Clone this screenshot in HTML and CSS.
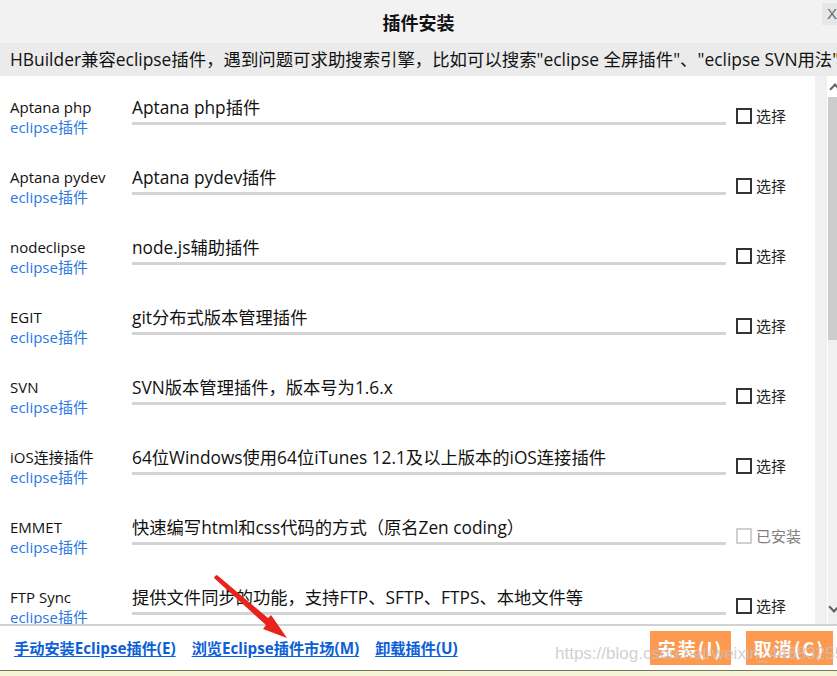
FILE: index.html
```html
<!DOCTYPE html>
<html lang="zh-CN">
<head>
<meta charset="utf-8">
<title>插件安装</title>
<link rel="stylesheet" href="styles.css">
</head>
<body>
<div class="dialog">
  <header class="titlebar">
    <h1 class="title">插件安装</h1>
    <span class="close">X</span>
  </header>
  <div class="info">HBuilder兼容eclipse插件，遇到问题可求助搜索引擎，比如可以搜索"eclipse 全屏插件"、"eclipse SVN用法"</div>
  <div class="content">
    <div class="list">
      <div class="row">
        <div class="name"><div class="pname">Aptana php</div><div class="ptype">eclipse插件</div></div>
        <div class="desc"><div class="dtext">Aptana php插件</div><div class="bar"></div></div>
        <label class="pick"><input type="checkbox" class="box"><span>选择</span></label>
      </div>
      <div class="row">
        <div class="name"><div class="pname">Aptana pydev</div><div class="ptype">eclipse插件</div></div>
        <div class="desc"><div class="dtext">Aptana pydev插件</div><div class="bar"></div></div>
        <label class="pick"><input type="checkbox" class="box"><span>选择</span></label>
      </div>
      <div class="row">
        <div class="name"><div class="pname">nodeclipse</div><div class="ptype">eclipse插件</div></div>
        <div class="desc"><div class="dtext">node.js辅助插件</div><div class="bar"></div></div>
        <label class="pick"><input type="checkbox" class="box"><span>选择</span></label>
      </div>
      <div class="row">
        <div class="name"><div class="pname">EGIT</div><div class="ptype">eclipse插件</div></div>
        <div class="desc"><div class="dtext">git分布式版本管理插件</div><div class="bar"></div></div>
        <label class="pick"><input type="checkbox" class="box"><span>选择</span></label>
      </div>
      <div class="row">
        <div class="name"><div class="pname">SVN</div><div class="ptype">eclipse插件</div></div>
        <div class="desc"><div class="dtext">SVN版本管理插件，版本号为1.6.x</div><div class="bar"></div></div>
        <label class="pick"><input type="checkbox" class="box"><span>选择</span></label>
      </div>
      <div class="row">
        <div class="name"><div class="pname">iOS连接插件</div><div class="ptype">eclipse插件</div></div>
        <div class="desc"><div class="dtext">64位Windows使用64位iTunes 12.1及以上版本的iOS连接插件</div><div class="bar"></div></div>
        <label class="pick"><input type="checkbox" class="box"><span>选择</span></label>
      </div>
      <div class="row">
        <div class="name"><div class="pname">EMMET</div><div class="ptype">eclipse插件</div></div>
        <div class="desc"><div class="dtext">快速编写html和css代码的方式（原名Zen coding）</div><div class="bar"></div></div>
        <label class="pick disabled"><input type="checkbox" class="box" disabled><span>已安装</span></label>
      </div>
      <div class="row">
        <div class="name"><div class="pname">FTP Sync</div><div class="ptype">eclipse插件</div></div>
        <div class="desc"><div class="dtext">提供文件同步的功能，支持FTP、SFTP、FTPS、本地文件等</div><div class="bar"></div></div>
        <label class="pick"><input type="checkbox" class="box"><span>选择</span></label>
      </div>
    </div>
    <div class="gutter"></div>
    <div class="scrollbar">
      <div class="sb-arrow sb-up"></div>
      <div class="sb-thumb"></div>
      <div class="sb-track"></div>
      <div class="sb-arrow sb-down"></div>
    </div>
  </div>
  <footer class="footer">
    <a class="link" href="#">手动安装Eclipse插件(E)</a>
    <a class="link" href="#">浏览Eclipse插件市场(M)</a>
    <a class="link" href="#">卸载插件(U)</a>
    <div class="buttons">
      <button class="btn btn-install">安装(I)</button>
      <button class="btn btn-cancel">取消(C)</button>
    </div>
  </footer>
  <div class="bottom-strip"></div>

  <svg class="red-arrow" width="90" height="70" viewBox="0 0 90 70">
    <polygon fill="#e8231c" points="1,1 3,0 54,43 57,40 73,63 49,54 52,50 0,3"/>
  </svg>
  <div class="watermark">https://blog.csdn.net/weixin_44683255</div>
</div>
</body>
</html>
```

FILE: styles.css
```css
* { box-sizing: border-box; }

html, body {
  margin: 0;
  padding: 0;
  background: #ffffff;
}

body {
  width: 837px;
  height: 676px;
  overflow: hidden;
  font-family: "Open Sans", "Noto Sans CJK SC", sans-serif;
  color: #1a1a1a;
}

.dialog {
  position: relative;
  width: 837px;
  height: 676px;
  display: flex;
  flex-direction: column;
  overflow: hidden;
}

.titlebar {
  height: 43px;
  flex: none;
  background: #f2f2f2;
  display: flex;
  align-items: center;
  justify-content: center;
  position: relative;
}

.title {
  margin: 0;
  font-size: 18px;
  font-weight: 700;
  color: #111;
  font-family: "Noto Sans CJK SC", sans-serif;
  line-height: 20px;
}

.close {
  position: absolute;
  top: 3px;
  right: 0;
  width: 15px;
  height: 22px;
  background: #e6e6e6;
  color: #6a6a6a;
  font-size: 15px;
  line-height: 22px;
  padding-left: 5px;
  font-family: "Liberation Sans", sans-serif;
  overflow: hidden;
}

.info {
  height: 33px;
  flex: none;
  background: #ebebeb;
  padding-left: 10px;
  font-size: 17.4px;
  line-height: 33px;
  white-space: nowrap;
  overflow: hidden;
  color: #111;
}

.content {
  height: 550px;
  flex: none;
  display: flex;
  overflow: hidden;
  border-bottom: 2px solid #d2d2d2;
}

.list {
  width: 815px;
  flex: none;
  overflow: hidden;
}

.row {
  height: 70px;
  display: flex;
}

.name {
  width: 132px;
  flex: none;
  padding-left: 10px;
  padding-top: 21px;
}

.pname {
  font-size: 15px;
  line-height: 20px;
  color: #111;
  white-space: nowrap;
}

.ptype {
  font-size: 15px;
  line-height: 20px;
  color: #2a78e4;
  white-space: nowrap;
}

.desc {
  width: 594px;
  flex: none;
  padding-top: 20px;
}

.dtext {
  font-size: 17.3px;
  line-height: 24px;
  color: #111;
  white-space: nowrap;
  overflow: hidden;
}

.bar {
  margin-top: 2px;
  height: 3px;
  background: #d4d4d4;
}

.pick {
  margin-left: 10px;
  padding-top: 31px;
  display: flex;
  align-items: flex-start;
  gap: 4px;
  font-size: 15px;
  line-height: 18px;
  color: #222;
}

.box {
  appearance: none;
  -webkit-appearance: none;
  margin: 1px 0 0 0;
  width: 16px;
  height: 16px;
  border: 2px solid #333;
  background: #fff;
  flex: none;
}

.pick.disabled {
  color: #808080;
}

.pick.disabled .box {
  border-color: #cfcfcf;
}

.gutter {
  width: 12px;
  flex: none;
  background: #f0f0f0;
}

.scrollbar {
  width: 10px;
  flex: none;
  margin-left: 1px;
  display: flex;
  flex-direction: column;
  background: #f0f0f0;
}

.sb-arrow {
  height: 21px;
  flex: none;
  position: relative;
  background: #ffffff;
}

.sb-up::before {
  content: "";
  position: absolute;
  left: 3px;
  top: 9px;
  width: 6px;
  height: 6px;
  border-left: 2px solid #606060;
  border-top: 2px solid #606060;
  transform: rotate(45deg);
}

.sb-down {
  background: #f0f0f0;
  height: 27px;
}

.sb-down::before {
  content: "";
  position: absolute;
  left: 2px;
  top: 6px;
  width: 6px;
  height: 6px;
  border-right: 2px solid #606060;
  border-bottom: 2px solid #606060;
  transform: rotate(45deg);
}

.sb-thumb {
  height: 243px;
  flex: none;
  background: #cdcdcd;
}

.sb-track {
  flex: 1;
}

.footer {
  height: 44px;
  flex: none;
  display: flex;
  align-items: center;
  padding-left: 14px;
  gap: 16px;
  background: #ffffff;
}

.link {
  font-size: 15.2px;
  font-weight: 700;
  color: #0b60d6;
  text-decoration: underline;
  text-underline-offset: 2px;
  white-space: nowrap;
  line-height: 20px;
}

.buttons {
  margin-left: auto;
  display: flex;
  gap: 15px;
  padding-right: 4px;
}

.btn {
  height: 34px;
  border: none;
  background: #fe9a50;
  color: #ffffff;
  font-family: "Noto Sans CJK SC", sans-serif;
  font-weight: 700;
  font-size: 18px;
  letter-spacing: 2px;
  padding: 0;
  line-height: 34px;
}

.btn-install { width: 81px; }
.btn-cancel { width: 87px; }

.bottom-strip {
  flex: 1;
  border-top: 1px solid #77775a;
  background: #f6f4d8;
}

.red-arrow {
  position: absolute;
  left: 214px;
  top: 575px;
}

.watermark {
  position: absolute;
  left: 555px;
  top: 644px;
  font-family: "Liberation Sans", sans-serif;
  font-size: 17px;
  line-height: 20px;
  color: rgba(196, 196, 196, 0.8);
  white-space: nowrap;
  pointer-events: none;
}
```
